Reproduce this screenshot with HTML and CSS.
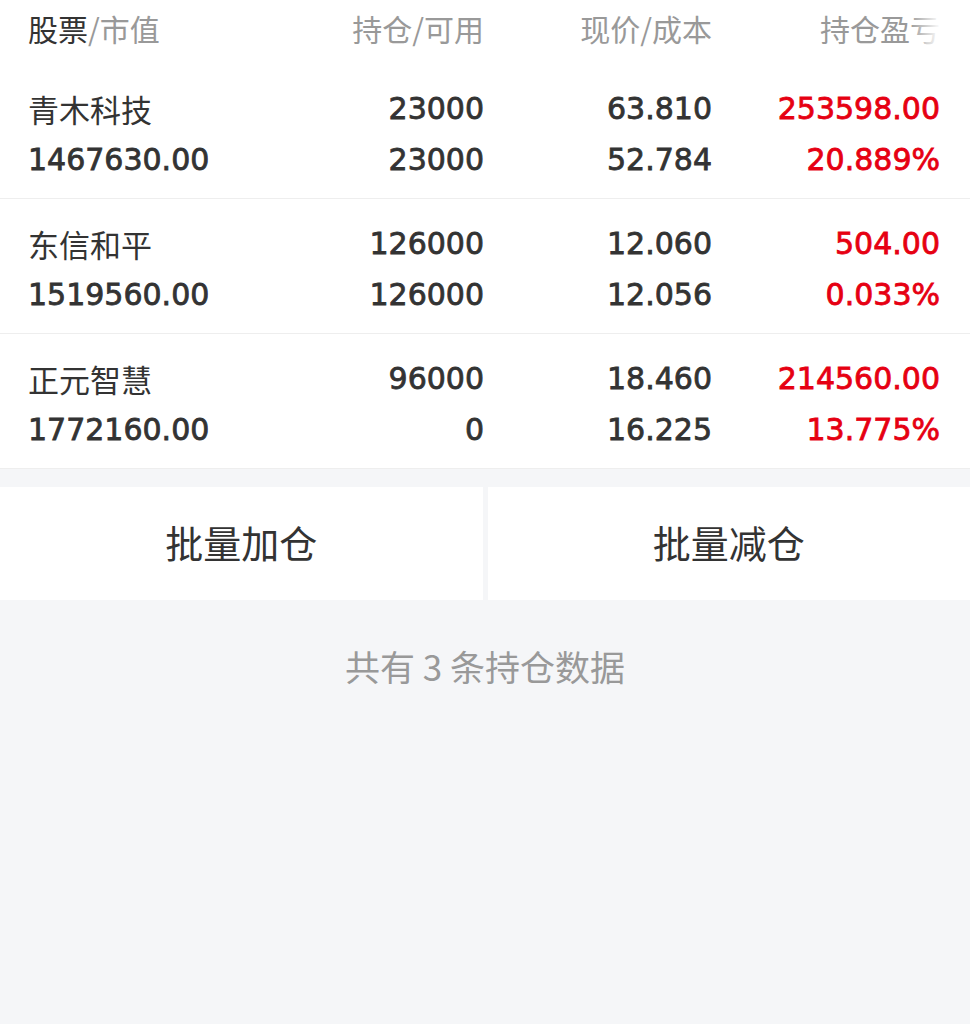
FILE: index.html
```html
<!DOCTYPE html>
<html lang="zh-CN">

<head>
    <meta charset="UTF-8">
    <meta name="viewport" content="width=device-width, initial-scale=1.0">
    <title>持仓</title>
    <link rel="stylesheet" href="styles.css">
</head>

<body>

    <div class="pos-head">
        <div class="col"><span class="hl">股票</span>/市值</div>
        <div class="col right">持仓/可用</div>
        <div class="col right">现价/成本</div>
        <div class="col right">持仓盈亏</div>
        <div class="head-fade"></div>
    </div>

    <div class="pos-list">
        <div class="pos-row">
            <div class="col">
                <div class="name">青木科技</div>
                <div class="num">1467630.00</div>
            </div>
            <div class="col right">
                <div class="num">23000</div>
                <div class="num">23000</div>
            </div>
            <div class="col right">
                <div class="num">63.810</div>
                <div class="num">52.784</div>
            </div>
            <div class="col right up">
                <div class="num">253598.00</div>
                <div class="num">20.889%</div>
            </div>
        </div>
        <div class="pos-row">
            <div class="col">
                <div class="name">东信和平</div>
                <div class="num">1519560.00</div>
            </div>
            <div class="col right">
                <div class="num">126000</div>
                <div class="num">126000</div>
            </div>
            <div class="col right">
                <div class="num">12.060</div>
                <div class="num">12.056</div>
            </div>
            <div class="col right up">
                <div class="num">504.00</div>
                <div class="num">0.033%</div>
            </div>
        </div>
        <div class="pos-row">
            <div class="col">
                <div class="name">正元智慧</div>
                <div class="num">1772160.00</div>
            </div>
            <div class="col right">
                <div class="num">96000</div>
                <div class="num">0</div>
            </div>
            <div class="col right">
                <div class="num">18.460</div>
                <div class="num">16.225</div>
            </div>
            <div class="col right up">
                <div class="num">214560.00</div>
                <div class="num">13.775%</div>
            </div>
        </div>
    </div>

    <div class="btn-bar">
        <button class="btn">批量加仓</button>
        <button class="btn">批量减仓</button>
    </div>

    <p class="total">共有 3 条持仓数据</p>

</body>

</html>
```

FILE: styles.css
```css
* {
    margin: 0;
    padding: 0;
    box-sizing: border-box;
}

body {
    background-color: #f5f6f8;
    color: #333;
    font-family: "Noto Sans CJK SC", sans-serif;
    min-height: 1024px;
}

/* header row */
.pos-head {
    position: relative;
    display: grid;
    grid-template-columns: repeat(4, 1fr);
    height: 64px;
    padding: 0 30px 0 28px;
    background-color: #fff;
    color: #999;
    font-size: 30px;
    line-height: 56px;
}

.pos-head .hl {
    color: #333;
}

.head-fade {
    position: absolute;
    top: 0;
    right: 0;
    width: 60px;
    height: 56px;
    background: linear-gradient(to right, rgba(255, 255, 255, 0), rgba(255, 255, 255, 0.9) 45%, #fff);
}

.right {
    text-align: right;
}

/* list */
.pos-list {
    background-color: #fff;
}

.pos-row {
    display: grid;
    grid-template-columns: repeat(4, 1fr);
    height: 135px;
    padding: 19px 30px 0 28px;
    border-bottom: 1px solid #eeeeee;
    line-height: 51px;
}

.name {
    font-size: 31px;
}

.num {
    font-family: "DejaVu Sans", "Noto Sans CJK SC", sans-serif;
    font-size: 30px;
    -webkit-text-stroke: 0.8px currentColor;
    white-space: nowrap;
}

.up {
    color: #e60012;
}

/* buttons */
.btn-bar {
    display: flex;
    gap: 5px;
    margin-top: 18px;
}

.btn {
    flex: 1;
    height: 113px;
    padding-bottom: 4px;
    border: none;
    background-color: #fff;
    color: #333;
    font-family: "Noto Sans CJK SC", sans-serif;
    font-size: 38px;
}

.total {
    margin-top: 42px;
    text-align: center;
    color: #999;
    font-size: 35px;
    line-height: 48px;
}
```
